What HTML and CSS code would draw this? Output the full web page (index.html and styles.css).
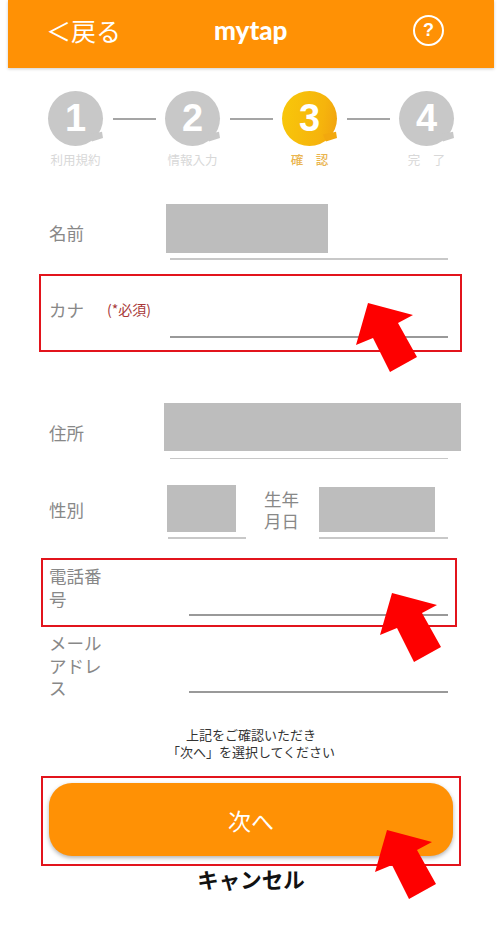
FILE: index.html
```html
<!DOCTYPE html>
<html lang="ja">
<head>
<meta charset="utf-8">
<title>mytap</title>
<link rel="stylesheet" href="styles.css">
</head>
<body>
<header class="topbar">
  <span class="back">&#xFF1C;戻る</span>
  <span class="brand">mytap</span>
  <span class="help">?</span>
</header>
<ol class="stepper">
  <li class="step"><span class="badge">1</span><span class="step-name">利用規約</span></li>
  <li class="connector"></li>
  <li class="step"><span class="badge">2</span><span class="step-name">情報入力</span></li>
  <li class="connector"></li>
  <li class="step current"><span class="badge">3</span><span class="step-name">確　認</span></li>
  <li class="connector"></li>
  <li class="step"><span class="badge">4</span><span class="step-name">完　了</span></li>
</ol>
<main class="form">
  <div class="row row-name">
    <span class="label w-name">名前</span>
    <div class="value">
      <div class="mask mask-name"></div>
      <div class="rule light rule-name"></div>
    </div>
  </div>
  <div class="frame frame-kana">
    <span class="label w-kana">カナ</span>
    <span class="required">(*必須)</span>
    <div class="rule rule-kana"></div>
  </div>
  <div class="row row-address">
    <span class="label w-address">住所</span>
    <div class="value">
      <div class="mask mask-address"></div>
      <div class="rule light rule-address"></div>
    </div>
  </div>
  <div class="row row-gender">
    <span class="label w-gender">性別</span>
    <div class="value">
      <div class="mask mask-gender"></div>
      <div class="rule light rule-gender"></div>
    </div>
    <span class="label birth">生年<br>月日</span>
    <div class="value">
      <div class="mask mask-birth"></div>
      <div class="rule light rule-birth"></div>
    </div>
  </div>
  <div class="frame frame-tel">
    <span class="label wrap">電話番号</span>
    <div class="rule rule-tel"></div>
  </div>
  <div class="row row-mail">
    <span class="label wrap">メールアドレス</span>
    <div class="rule rule-mail"></div>
  </div>
  <p class="note">上記をご確認いただき<br>「次へ」を選択してください</p>
  <div class="frame frame-next">
    <button class="next" type="button">次へ</button>
  </div>
  <div class="cancel">キャンセル</div>
</main>
<svg class="arrow arrow-kana" viewBox="0 0 90 72" aria-hidden="true"><path d="M12 0 57 12 42 20 61 54 34 69 17 35 0 42Z"/></svg>
<svg class="arrow arrow-tel" viewBox="0 0 90 72" aria-hidden="true"><path d="M12 0 57 12 42 20 61 54 34 69 17 35 0 42Z"/></svg>
<svg class="arrow arrow-next" viewBox="0 0 90 72" aria-hidden="true"><path d="M12 0 57 12 42 20 61 54 34 69 17 35 0 42Z"/></svg>
</body>
</html>
```
FILE: styles.css
```css
* { box-sizing: border-box; }
html, body { margin: 0; padding: 0; }
body {
  width: 500px;
  height: 925px;
  position: relative;
  overflow: hidden;
  background: #fff;
  font-family: "Noto Sans CJK JP", "Noto Sans", sans-serif;
  color: #888;
}
.topbar {
  margin-left: 8px;
  width: 486px;
  height: 68px;
  background: #ff9105;
  box-shadow: 0 1px 3px rgba(0,0,0,.2);
  color: #fff;
  display: flex;
  align-items: center;
  padding: 0 0 8px 38px;
}
.back { font-size: 25px; line-height: 30px; width: 168px; flex: none; white-space: nowrap; }
.brand {
  font-family: Lato, "Open Sans", sans-serif;
  font-weight: 900;
  font-size: 26px;
  line-height: 30px;
  width: 199px;
  flex: none;
}
.help {
  width: 31px;
  height: 31px;
  border: 2px solid #fff;
  border-radius: 50%;
  font-family: "Liberation Sans", sans-serif;
  font-weight: 700;
  font-size: 18px;
  line-height: 27px;
  text-align: center;
  flex: none;
}
.stepper {
  list-style: none;
  margin: 0;
  padding: 23px 0 0 48px;
  height: 136px;
  display: flex;
  align-items: flex-start;
}
.step { width: 55px; display: flex; flex-direction: column; align-items: center; }
.badge {
  position: relative;
  width: 55px;
  height: 55px;
  border-radius: 50%;
  background: #c8c8c8;
  color: #fff;
  font-family: "Liberation Sans", sans-serif;
  font-weight: 700;
  font-size: 38px;
  line-height: 55px;
  text-align: center;
}
.badge::after {
  content: "";
  position: absolute;
  right: 0;
  bottom: 3px;
  width: 14px;
  height: 14px;
  background: inherit;
  clip-path: polygon(93% 20%, 100% 64%, 21% 90%, 0 40%);
}
.current .badge { background: linear-gradient(100deg, #f8c80a, #f6b40c 70%, #f0a010); }
.current .badge::after { background: #f2a80e; }
.step-name {
  margin-top: 5px;
  font-size: 12.5px;
  line-height: 18px;
  color: #d8d8d8;
  white-space: nowrap;
}
.current .step-name { color: #eab550; font-weight: 500; }
.connector { width: 43px; height: 1.5px; margin: 27px 9px 0 10px; background: #a5a5a5; flex: none; }
.form { display: block; }
.label { font-size: 17.5px; line-height: 22.5px; color: #888; flex: none; }
.row { display: flex; padding-left: 49px; }
.value { display: flex; flex-direction: column; flex: none; }
.mask { background: #bdbdbd; }
.rule { height: 1.5px; background: #999; flex: none; }
.rule.light { background: #c8c8c8; }
.row-name { height: 56px; align-items: center; }
.w-name { width: 117px; margin-top: 2px; }
.mask-name { width: 162px; height: 49px; }
.rule-name { margin: 5px 0 0 4px; width: 278px; }
.frame { border: 2px solid #e2141c; display: flex; }
.frame-kana {
  margin: 14px 0 0 39px;
  width: 423px;
  height: 78px;
  padding-left: 8px;
}
.w-kana { width: 58px; margin-top: 23px; }
.required {
  width: 63px;
  margin-top: 23px;
  font-size: 14px;
  line-height: 20px;
  color: #a83838;
}
.rule-kana { width: 278px; margin-top: 60px; }
.row-address { margin-top: 50px; height: 58px; align-items: center; }
.w-address { width: 115px; margin-top: 4px; }
.mask-address { width: 297px; height: 48px; }
.rule-address { margin: 7px 0 0 6px; width: 278px; }
.row-gender { margin-top: 24px; height: 55px; align-items: flex-start; }
.w-gender { width: 118px; margin-top: 15px; }
.mask-gender { margin-top: 1px; width: 69px; height: 47px; }
.rule-gender { margin: 5px 0 0 1px; width: 78px; }
.birth { margin: 4px 0 0 18px; width: 55px; line-height: 22px; }
.mask-birth { margin-top: 3px; width: 116px; height: 45px; }
.rule-birth { margin-top: 5px; width: 129px; }
.frame-tel {
  margin: 19px 0 0 41px;
  width: 416px;
  height: 69px;
  padding-left: 6px;
}
.wrap { width: 56px; margin-top: 5px; word-break: break-all; }
.rule-tel { margin: 54px 0 0 84px; width: 259px; }
.row-mail { height: 69px; }
.row-mail .wrap { margin-top: 5px; }
.rule-mail { margin: 64px 0 0 84px; width: 259px; }
.note {
  margin: 30px 0 0 41px;
  width: 420px;
  font-size: 13px;
  line-height: 17px;
  text-align: center;
  color: #333;
}
.frame-next {
  margin: 16px 0 0 41px;
  width: 420px;
  height: 90px;
  padding: 5px 0 0 6px;
}
.next {
  width: 404px;
  height: 73px;
  border: 0;
  border-radius: 23px;
  background: #ff9105;
  box-shadow: 0 2px 4px rgba(0,0,0,.3);
  color: #fff;
  font-family: inherit;
  font-size: 23px;
}
.cancel {
  margin-left: 41px;
  width: 420px;
  text-align: center;
  font-size: 21.5px;
  font-weight: 700;
  line-height: 26px;
  color: #111;
}
.arrow { position: absolute; width: 90px; height: 72px; fill: #fe0000; }
.arrow-kana { left: 356px; top: 303px; }
.arrow-tel { left: 380px; top: 593px; }
.arrow-next { left: 375px; top: 830px; }
```
